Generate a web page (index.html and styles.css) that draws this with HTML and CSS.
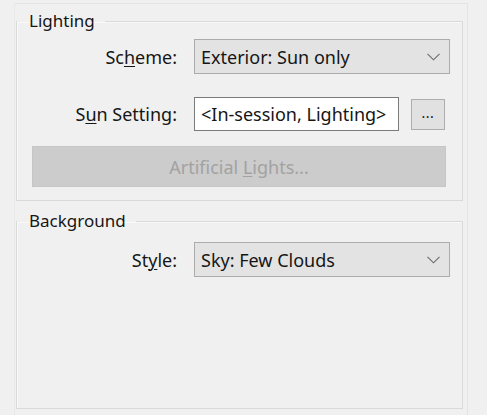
FILE: index.html
```html
<!DOCTYPE html>
<html>
<head>
<meta charset="utf-8">
<link rel="stylesheet" href="styles.css">
</head>
<body>
<div class="frame">
  <fieldset class="group group-lighting">
    <legend>Lighting</legend>
    <div class="rows">
      <div class="row row-scheme">
        <span class="label">Sc<u>h</u>eme:</span>
        <div class="select"><span>Exterior: Sun only</span>
          <svg class="chev" width="13" height="8" viewBox="0 0 13 8"><path d="M0.5 0.8 L6.5 6.8 L12.5 0.8" fill="none" stroke="#6a6a6a" stroke-width="1.1"/></svg>
        </div>
      </div>
      <div class="row row-sun">
        <span class="label">S<u>u</u>n Setting:</span>
        <div class="sun-controls">
          <div class="textbox">&lt;In-session, Lighting&gt;</div>
          <div class="dots">...</div>
        </div>
      </div>
      <div class="btn-disabled"><span>Artificial <u>L</u>ights...</span></div>
    </div>
  </fieldset>
  <fieldset class="group group-bg">
    <legend>Background</legend>
    <div class="rows">
      <div class="row row-style">
        <span class="label">St<u>y</u>le:</span>
        <div class="select"><span>Sky: Few Clouds</span>
          <svg class="chev" width="13" height="8" viewBox="0 0 13 8"><path d="M0.5 0.8 L6.5 6.8 L12.5 0.8" fill="none" stroke="#6a6a6a" stroke-width="1.1"/></svg>
        </div>
      </div>
    </div>
  </fieldset>
</div>
</body>
</html>
```

FILE: styles.css
```css
html, body {
  margin: 0;
  padding: 0;
  background: #f0f0f0;
  width: 487px;
  height: 415px;
  overflow: hidden;
}
body {
  font-family: "Noto Sans", "Open Sans", sans-serif;
  font-size: 18px;
  color: #161616;
}
.frame {
  margin-left: 14px;
  margin-top: 3px;
  width: 454px;
  height: 420px;
  border-top: 1px solid #e4e4e4;
  border-right: 1px solid #e4e4e4;
  border-left: 1px solid #e9e9e9;
  box-sizing: border-box;
  padding-left: 1px;
}
.group {
  margin: 0;
  padding: 0;
  width: 447px;
  box-sizing: border-box;
  border: 1px solid #d9d9d9;
  box-shadow: inset 1px 1px 0 #f9f9f9;
  min-width: 0;
}
.group-lighting {
  margin-top: 7px;
}
.group-bg {
  margin-top: 10px;
  height: 198px;
}
legend {
  padding: 0 10px 0 12px;
  line-height: 20px;
  height: 20px;
  font-size: 17px;
}
.rows {
  padding: 8px 16px 13px 15px;
  display: flex;
  flex-direction: column;
}
.group-bg .rows {
  padding-top: 11px;
}
.row {
  display: grid;
  grid-template-columns: 145px 1fr;
  column-gap: 17px;
  align-items: center;
}
.label {
  text-align: right;
  white-space: nowrap;
}
u {
  text-decoration: underline;
  text-decoration-thickness: 1px;
  text-underline-offset: 2px;
}
.select {
  height: 35px;
  box-sizing: border-box;
  margin-right: -4px;
  background: #e3e3e3;
  border: 1px solid #acacac;
  display: flex;
  align-items: center;
  justify-content: space-between;
  padding: 0 9px 0 6px;
}
.chev {
  display: block;
}
.row-sun {
  margin-top: 23px;
}
.sun-controls {
  display: flex;
  align-items: center;
  gap: 12px;
}
.textbox {
  width: 205px;
  height: 34px;
  box-sizing: border-box;
  background: #ffffff;
  border: 1px solid #7a7a7a;
  display: flex;
  align-items: center;
  padding-left: 6px;
  white-space: nowrap;
  overflow: hidden;
}
.dots {
  width: 34px;
  height: 31px;
  box-sizing: border-box;
  background: #e1e1e1;
  border: 1px solid #adadad;
  display: flex;
  align-items: center;
  justify-content: center;
  font-size: 14px;
  letter-spacing: 0.5px;
  padding-bottom: 3px;
}
.btn-disabled {
  margin-top: 15px;
  height: 41px;
  background: #cccccc;
  border: 1px solid #c6c6c6;
  box-sizing: border-box;
  color: #a2a2a2;
  display: flex;
  align-items: center;
  justify-content: center;
}
```
